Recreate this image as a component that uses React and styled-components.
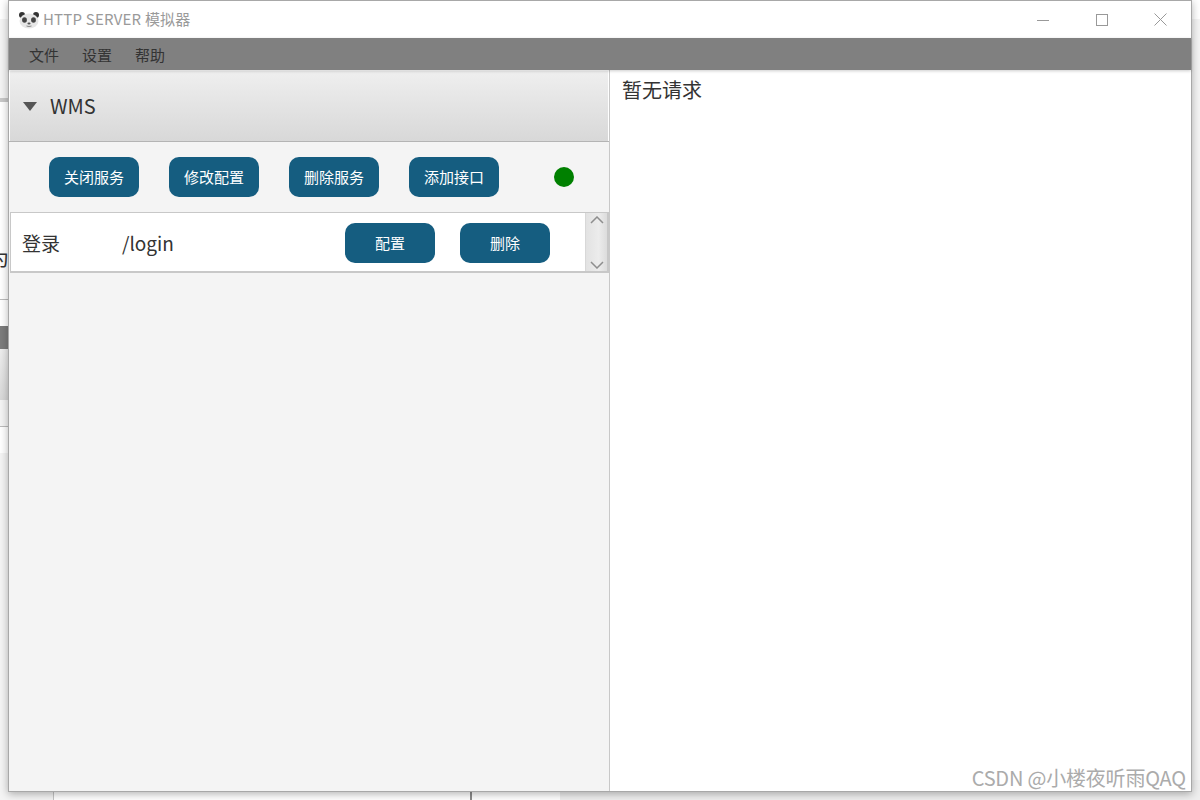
import React from 'react'
import styled, { createGlobalStyle } from 'styled-components'

const UI_FONT = `"Noto Sans CJK SC", "Noto Sans", sans-serif`

const GlobalStyle = createGlobalStyle`
  html, body {
    margin: 0;
    padding: 0;
    height: 800px;
    overflow: hidden;
    background: #f4f4f4;
    font-family: ${UI_FONT};
  }
`

const Desktop = styled.div`
  position: relative;
  width: 1200px;
  height: 800px;
  overflow: hidden;
  background: #f4f4f4;
`

const BackStrip = styled.div`
  position: absolute;
  left: 0;
  top: ${(p) => p.$top}px;
  width: 8px;
  height: ${(p) => p.$height}px;
  background: ${(p) => p.$bg};
`

const BackCorner = styled.div`
  position: absolute;
  right: 0;
  top: 0;
  width: 8px;
  height: 19px;
  background: #fff;
`

const BackGlyph = styled.div`
  position: absolute;
  left: -11px;
  top: 245px;
  font-size: 20px;
  line-height: 26px;
  color: #333;
`

const BackSheet = styled.div`
  position: absolute;
  left: 53px;
  top: 780px;
  width: 416px;
  height: 20px;
  background: #fff;
  border-left: 1px solid #c4c4c4;
  border-right: 2px solid #8c8c8c;
`

const BackGap = styled.div`
  position: absolute;
  left: 472px;
  top: 780px;
  width: 88px;
  height: 20px;
  background: #fff;
`

const BackRight = styled.div`
  position: absolute;
  left: 560px;
  top: 780px;
  width: 640px;
  height: 20px;
  background: #eeeeee;
`

const Window = styled.div`
  position: absolute;
  left: 8px;
  top: 0;
  width: 1182px;
  height: 790px;
  border: 1px solid #a8a8a8;
  background: #fff;
  box-shadow: 0 2px 8px rgba(0, 0, 0, 0.3);
  display: flex;
  flex-direction: column;
`

const TitleBar = styled.div`
  height: 37px;
  flex: none;
  box-sizing: border-box;
  display: flex;
  align-items: center;
  background: #fff;
  padding-left: 9px;
`

const TitleText = styled.span`
  margin: 0 0 3px 3px;
  font-size: 15px;
  letter-spacing: 0.2px;
  color: #9a9a9a;
`

const WindowControls = styled.div`
  margin-left: auto;
  display: flex;
  height: 100%;
  align-items: center;
  padding-right: 1px;
`

const ControlButton = styled.div`
  width: 59px;
  height: 100%;
  display: flex;
  align-items: center;
  justify-content: center;
`

const MenuBar = styled.div`
  height: 32px;
  flex: none;
  box-sizing: border-box;
  display: flex;
  align-items: center;
  gap: 23px;
  padding-left: 20px;
  background: #808080;
  position: relative;
  z-index: 1;
  box-shadow: 0 1px 3px rgba(0, 0, 0, 0.2);
`

const MenuItem = styled.span`
  font-size: 15px;
  color: #333;
`

const Body = styled.div`
  flex: 1;
  display: flex;
  min-height: 0;
`

const LeftPanel = styled.div`
  width: 601px;
  flex: none;
  box-sizing: border-box;
  background: #f4f4f4;
  border-right: 1px solid #c8c8c8;
  display: flex;
  flex-direction: column;
`

const ServiceHeader = styled.div`
  height: 72px;
  flex: none;
  box-sizing: border-box;
  display: flex;
  align-items: center;
  gap: 13px;
  padding-left: 14px;
  background: linear-gradient(#efefef, #d8d8d8);
  border-top: 1px solid #fff;
  border-bottom: 1px solid #b4b4b4;
  box-shadow: inset 1px 0 #fff, inset -1px 0 #fff;
`

const Arrow = styled.span`
  width: 0;
  height: 0;
  border-left: 7px solid transparent;
  border-right: 7px solid transparent;
  border-top: 9px solid #555;
`

const ServiceName = styled.span`
  margin-bottom: 2px;
  font-size: 20px;
  color: #333;
`

const Actions = styled.div`
  height: 70px;
  flex: none;
  box-sizing: border-box;
  display: flex;
  align-items: center;
  gap: 30px;
  padding-left: 40px;
`

const Button = styled.div`
  width: 90px;
  height: 40px;
  flex: none;
  box-sizing: border-box;
  padding-bottom: 2px;
  border-radius: 10px;
  background: #155d80;
  color: #fff;
  font-size: 15px;
  display: flex;
  align-items: center;
  justify-content: center;
`

const StatusDot = styled.span`
  width: 20px;
  height: 20px;
  margin-left: 25px;
  border-radius: 50%;
  background: #008000;
`

const RouteList = styled.div`
  height: 61px;
  flex: none;
  box-sizing: border-box;
  margin-left: 1px;
  width: 599px;
  background: #fff;
  border: 1px solid #c8c8c8;
  border-width: 1px 2px 2px 1px;
  display: flex;
`

const RouteRow = styled.div`
  flex: 1;
  display: flex;
  align-items: center;
  padding: 2px 0 0 11px;
`

const RouteName = styled.span`
  width: 100px;
  margin-bottom: 2px;
  font-size: 19px;
  color: #333;
`

const RoutePath = styled.span`
  width: 223px;
  margin-bottom: 2px;
  font-size: 19px;
  color: #333;
`

const RowButtons = styled.div`
  display: flex;
  gap: 25px;
`

const Scrollbar = styled.div`
  width: 22px;
  flex: none;
  display: flex;
  flex-direction: column;
  align-items: center;
  justify-content: space-between;
  padding: 3px 0 2px;
  box-sizing: border-box;
  background: linear-gradient(90deg, #e2e2e2, #ececec 60%, #dcdcdc);
  border-left: 1px solid #d8d8d8;
`

const RightPanel = styled.div`
  flex: 1;
  padding: 6px 12px;
  background: #fff;
  position: relative;
`

const RequestText = styled.div`
  font-size: 20px;
  line-height: 28px;
  color: #333;
`

const Watermark = styled.div`
  position: absolute;
  right: 5px;
  bottom: 0;
  font-size: 20px;
  line-height: 26px;
  letter-spacing: -0.2px;
  color: #ababab;
  white-space: nowrap;
`

const PandaIcon = () => (
  <svg width="22" height="18" viewBox="0 0 22 18">
    <circle cx="4" cy="4" r="3" fill="#333" />
    <circle cx="18" cy="4" r="3" fill="#333" />
    <ellipse cx="11" cy="10" rx="9.5" ry="7.5" fill="#e6e6e6" />
    <ellipse cx="6.5" cy="9" rx="2.4" ry="2.8" fill="#444" />
    <ellipse cx="15.5" cy="9" rx="2.4" ry="2.8" fill="#444" />
    <ellipse cx="11" cy="12.5" rx="1.6" ry="1" fill="#555" />
    <path d="M8.5 15 Q11 16 13.5 15" stroke="#888" fill="none" />
  </svg>
)

const MinimizeIcon = () => (
  <svg width="12" height="12" viewBox="0 0 12 12">
    <path d="M0 6.5H12" stroke="#999" />
  </svg>
)

const MaximizeIcon = () => (
  <svg width="12" height="12" viewBox="0 0 12 12">
    <rect x="0.5" y="0.5" width="11" height="11" fill="none" stroke="#999" />
  </svg>
)

const CloseIcon = () => (
  <svg width="13" height="13" viewBox="0 0 13 13">
    <path d="M0.5 0.5L12.5 12.5M12.5 0.5L0.5 12.5" stroke="#999" />
  </svg>
)

const Chevron = ({ up }) => (
  <svg width="14" height="8" viewBox="0 0 14 8">
    <path d={up ? 'M1 7L7 1L13 7' : 'M1 1L7 7L13 1'} fill="none" stroke="#8e8e8e" strokeWidth="1.5" />
  </svg>
)

const App = () => {
  return (
    <Desktop>
      <GlobalStyle />
      <BackStrip $top={0} $height={19} $bg="#fff" />
      <BackStrip $top={98} $height={4} $bg="#c8c8c8" />
      <BackStrip $top={102} $height={197} $bg="#fff" />
      <BackStrip $top={299} $height={1} $bg="#bbb" />
      <BackStrip $top={300} $height={26} $bg="#fff" />
      <BackStrip $top={326} $height={23} $bg="#7c7c7c" />
      <BackStrip $top={349} $height={51} $bg="linear-gradient(#eee, #d8d8d8)" />
      <BackStrip $top={426} $height={1} $bg="#bbb" />
      <BackStrip $top={427} $height={26} $bg="#fff" />
      <BackCorner />
      <BackGlyph>为</BackGlyph>
      <BackSheet />
      <BackGap />
      <BackRight />

      <Window>
        <TitleBar>
          <PandaIcon />
          <TitleText>HTTP SERVER 模拟器</TitleText>
          <WindowControls>
            <ControlButton><MinimizeIcon /></ControlButton>
            <ControlButton><MaximizeIcon /></ControlButton>
            <ControlButton><CloseIcon /></ControlButton>
          </WindowControls>
        </TitleBar>
        <MenuBar>
          <MenuItem>文件</MenuItem>
          <MenuItem>设置</MenuItem>
          <MenuItem>帮助</MenuItem>
        </MenuBar>
        <Body>
          <LeftPanel>
            <ServiceHeader>
              <Arrow />
              <ServiceName>WMS</ServiceName>
            </ServiceHeader>
            <Actions>
              <Button>关闭服务</Button>
              <Button>修改配置</Button>
              <Button>删除服务</Button>
              <Button>添加接口</Button>
              <StatusDot />
            </Actions>
            <RouteList>
              <RouteRow>
                <RouteName>登录</RouteName>
                <RoutePath>/login</RoutePath>
                <RowButtons>
                  <Button>配置</Button>
                  <Button>删除</Button>
                </RowButtons>
              </RouteRow>
              <Scrollbar>
                <Chevron up />
                <Chevron />
              </Scrollbar>
            </RouteList>
          </LeftPanel>
          <RightPanel>
            <RequestText>暂无请求</RequestText>
            <Watermark>CSDN @小楼夜听雨QAQ</Watermark>
          </RightPanel>
        </Body>
      </Window>
    </Desktop>
  )
}

export default App
